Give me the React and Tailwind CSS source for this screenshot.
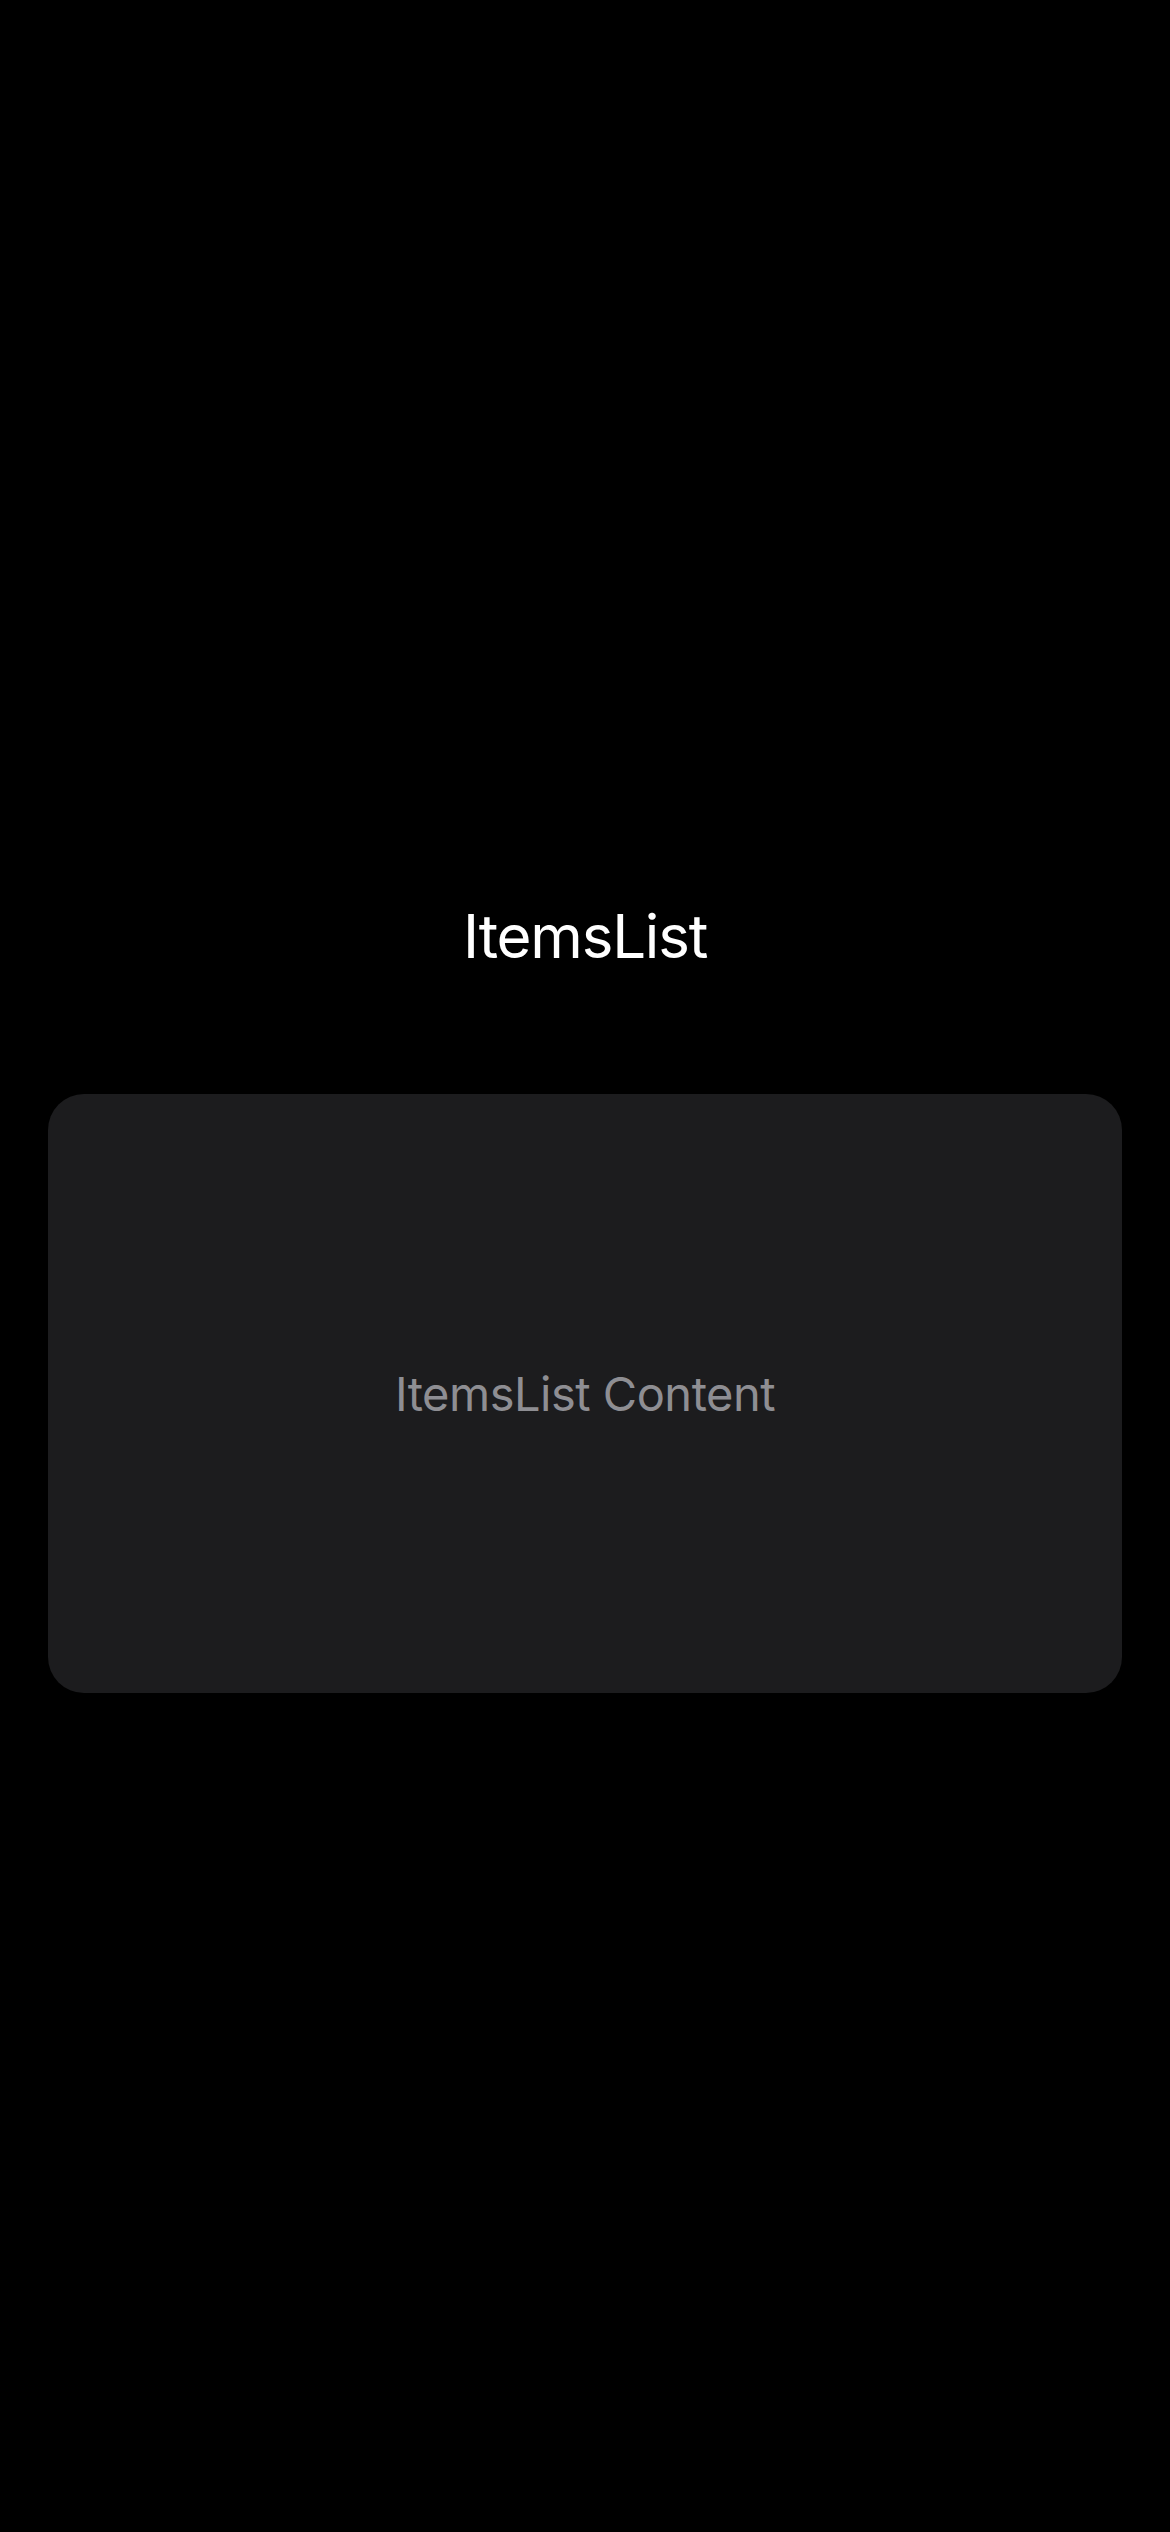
export default function App() {
  return (
    <div
      className="min-h-screen w-full bg-black flex flex-col items-center pt-[898px] px-[48px]"
      style={{ fontFamily: "Inter, 'Noto Sans', sans-serif" }}
    >
      <h1 className="text-[60px] leading-[77px] font-normal text-white tracking-[-1.2px]">ItemsList</h1>
      <div className="mt-[119px] w-full h-[599px] rounded-[36px] bg-[#1c1c1e] flex items-center justify-center">
        <span className="text-[47px] leading-[58px] text-[#8e8e93] tracking-[-0.5px]">ItemsList Content</span>
      </div>
    </div>
  );
}
